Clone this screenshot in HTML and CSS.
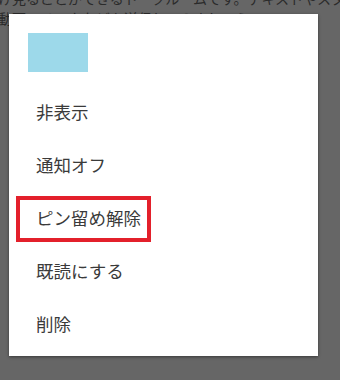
FILE: index.html
```html
<!DOCTYPE html>
<html lang="ja">
<head>
<meta charset="utf-8">
<link rel="stylesheet" href="styles.css">
</head>
<body>
<div class="backdrop">
  <p class="bg-text">け見ることができるトークルームです。テキストやスタンプ、写真<br>動画、リンクなどを送信してみましょう</p>
</div>
<div class="dialog">
  <div class="thumb"></div>
  <ul class="menu">
    <li class="item">非表示</li>
    <li class="item">通知オフ</li>
    <li class="item highlighted"><span class="mark"></span>ピン留め解除</li>
    <li class="item">既読にする</li>
    <li class="item">削除</li>
  </ul>
</div>
</body>
</html>
```

FILE: styles.css
```css
html, body {
  margin: 0;
  padding: 0;
  width: 340px;
  height: 380px;
  overflow: hidden;
  background: #666666;
  font-family: "Noto Sans CJK JP", "Noto Sans", sans-serif;
}
.backdrop {
  height: 380px;
  overflow: hidden;
}
.bg-text {
  margin: -12px 0 0 -2px;
  font-size: 14px;
  line-height: 20px;
  color: #2b2b2b;
  white-space: nowrap;
}
.dialog {
  position: absolute;
  left: 9px;
  top: 14px;
  width: 309px;
  height: 342px;
  background: #ffffff;
  box-shadow: 0 1px 3px rgba(0, 0, 0, 0.45);
  padding: 19px 0 0 0;
  box-sizing: border-box;
}
.thumb {
  width: 60px;
  height: 39px;
  margin-left: 19px;
  background: #9dd9ea;
}
.menu {
  list-style: none;
  margin: 13px 0 0 0;
  padding: 0;
}
.item {
  position: relative;
  height: 53px;
  display: flex;
  align-items: center;
  padding-left: 27px;
  font-size: 17.5px;
  color: #3a3a3a;
}
.mark {
  position: absolute;
  left: 7px;
  top: 5px;
  width: 135px;
  height: 46px;
  box-sizing: border-box;
  border: 4px solid #e3202b;
}
```
